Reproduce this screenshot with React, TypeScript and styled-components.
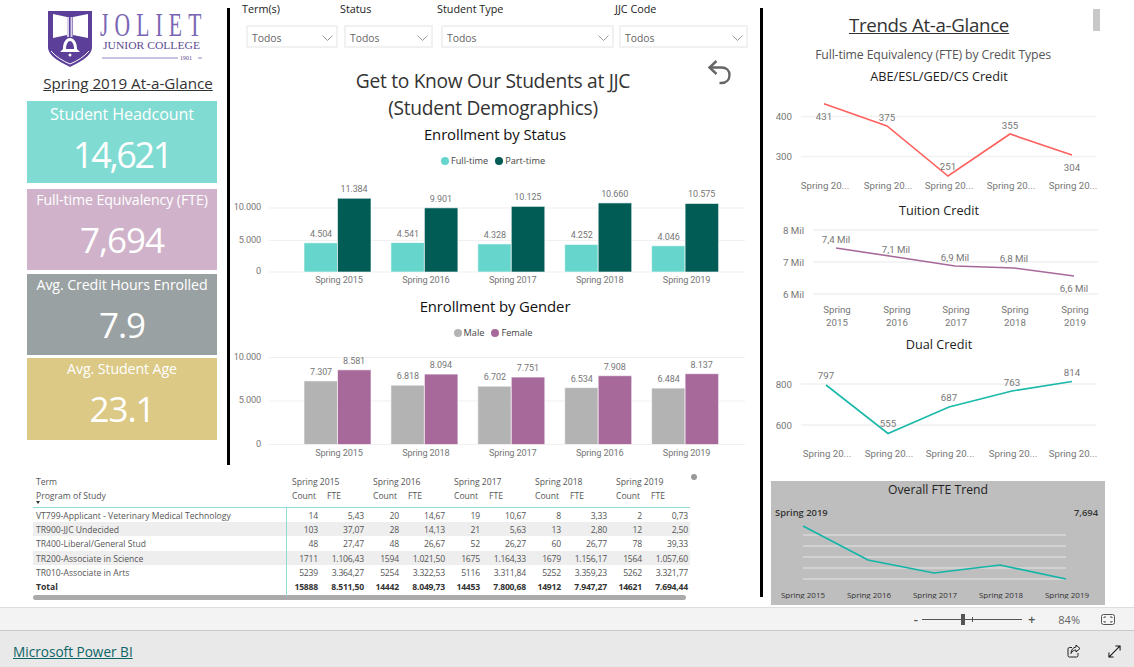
import React from 'react';
import styled, { createGlobalStyle } from 'styled-components';

const SANS = '"Open Sans", "Noto Sans", sans-serif';
const YEARS = ['Spring 2015', 'Spring 2016', 'Spring 2017', 'Spring 2018', 'Spring 2019'];

const GlobalStyle = createGlobalStyle`
  html, body { margin: 0; padding: 0; background: #fff; }
  body { font-family: ${SANS}; overflow: hidden; }
`;

const Page = styled('div')`
  width: 1134px;
  height: 667px;
  display: flex;
  flex-direction: column;
`;

const Report = styled('div')`
  height: 607px;
  display: flex;
  position: relative;
  background: #fff;
`;

const LeftGroup = styled('div')`
  width: 760px;
  display: flex;
  flex-direction: column;
`;

const TopRow = styled('div')`
  height: 465px;
  display: flex;
`;

const Divider = styled('div')<{ $bottom: number }>`
  width: 3px;
  flex: none;
  background: #000;
  margin-top: 8px;
  margin-bottom: ${(p) => p.$bottom}px;
`;

/* left sidebar */
const Sidebar = styled('div')`
  width: 227px;
  flex: none;
  padding-top: 8px;
  box-sizing: border-box;
`;

const LogoSvg = styled('svg')`
  display: block;
  margin-left: 46px;
`;

const GlanceTitle = styled('div')`
  margin-top: 3px;
  height: 20px;
  line-height: 20px;
  text-align: center;
  font-size: 15.2px;
  color: #333;
  text-decoration: underline;
  padding-left: 29px;
  white-space: nowrap;
`;

const Cards = styled('div')`
  margin: 8px 0 0 27px;
  width: 190px;
`;

const Card = styled('div')<{ $bg: string; $h: number; $mt: number }>`
  height: ${(p) => p.$h}px;
  margin-top: ${(p) => p.$mt}px;
  background: ${(p) => p.$bg};
  color: #fff;
  text-align: center;
  overflow: hidden;
`;

const CardLabel = styled('div')<{ $big?: boolean }>`
  font-size: ${(p) => (p.$big ? 16.1 : 14.2)}px;
  line-height: 20px;
  margin-top: ${(p) => (p.$big ? 3 : 1)}px;
  white-space: nowrap;
  letter-spacing: -0.1px;
`;

const CardValue = styled('div')<{ $big?: boolean }>`
  font-size: ${(p) => (p.$big ? 36 : 35)}px;
  font-weight: 400;
  line-height: 44px;
  margin-top: ${(p) => (p.$big ? 9 : 8)}px;
  letter-spacing: ${(p) => (p.$big ? -2.4 : -1)}px;
`;

/* centre column */
const Center = styled('div')`
  flex: 1;
  min-width: 0;
  position: relative;
`;

const Filters = styled('div')`
  display: flex;
  padding-left: 16px;
  height: 48px;
`;

const Filter = styled('div')<{ $w: number; $mr: number }>`
  width: ${(p) => p.$w}px;
  margin-right: ${(p) => p.$mr}px;
  flex: none;
`;

const FilterLabel = styled('div')`
  margin-left: -4px;
  height: 25px;
  line-height: 17px;
  font-size: 10.8px;
  color: #222;
`;

const Select = styled('div')`
  height: 23px;
  box-sizing: border-box;
  border: 2px solid #f1f1f1;
  display: flex;
  align-items: center;
  justify-content: space-between;
  padding: 3px 3px 0 4px;
  font-size: 10.4px;
  color: #666;
`;

const PageTitle = styled('div')`
  margin-top: 19px;
  padding-right: 4px;
  text-align: center;
  font-size: 19.2px;
  line-height: 27px;
  color: #333;
  letter-spacing: -0.3px;
`;

const UndoButton = styled('svg')`
  position: absolute;
  left: 476px;
  top: 58px;
`;

const SectionTitle = styled('div')<{ $mt: number }>`
  margin-top: ${(p) => p.$mt}px;
  text-align: center;
  font-size: 14.9px;
  line-height: 20px;
  color: #111;
  letter-spacing: -0.1px;
`;

const Legend = styled('div')`
  display: flex;
  justify-content: center;
  gap: 7px;
  height: 14px;
  margin-top: 10px;
  padding-right: 4px;
  font-size: 9.2px;
  line-height: 14px;
  color: #444;
`;

const LegendItem = styled('div')`
  display: flex;
  align-items: center;
  gap: 2px;
`;

const Dot = styled('span')<{ $c: string }>`
  width: 8px;
  height: 8px;
  border-radius: 50%;
  background: ${(p) => p.$c};
`;

const ChartSvg = styled('svg')`
  display: block;
  overflow: hidden;
`;

const AxisText = styled('text')`
  font-family: Roboto, "Liberation Sans", sans-serif;
  font-size: 9.2px;
  letter-spacing: -0.15px;
  fill: #777;
`;

const ValueText = styled('text')`
  font-family: Roboto, "Liberation Sans", sans-serif;
  font-size: 9px;
  letter-spacing: -0.1px;
  fill: #777;
`;

const LineText = styled('text')`
  font-family: Roboto, "Liberation Sans", sans-serif;
  font-size: 9.7px;
  fill: #777;
`;

/* table */
const TableArea = styled('div')`
  position: relative;
  padding: 9px 0 0 33px;
`;

const ScrollDot = styled('span')`
  position: absolute;
  left: 691px;
  top: 9px;
  width: 6px;
  height: 6px;
  border-radius: 50%;
  background: #999;
`;

const COLS = '254px 31px 46px 35px 46px 35px 46px 35px 46px 35px 46px';

const HeadRow = styled('div')<{ $h: number; $pb?: number }>`
  display: grid;
  grid-template-columns: ${COLS};
  height: ${(p) => p.$h}px;
  box-sizing: border-box;
  padding-bottom: ${(p) => p.$pb ?? 0}px;
  align-items: center;
  font-size: 8.6px;
  color: #555;
  white-space: nowrap;
`;

const HeadName = styled('div')`
  padding-left: 3px;
  position: relative;
`;

const HeadCell = styled('div')<{ $pl: number; $span?: number }>`
  padding-left: ${(p) => p.$pl}px;
  grid-column: span ${(p) => p.$span ?? 1};
`;

const SortMark = styled('span')`
  position: absolute;
  left: 3px;
  top: 11px;
  border-left: 2px solid transparent;
  border-right: 2px solid transparent;
  border-top: 3px solid #333;
`;

const Body = styled('div')`
  border-top: 1.5px solid #8fdcd4;
  width: 657px;
`;

const Row = styled('div')<{ $alt?: boolean; $bold?: boolean }>`
  display: grid;
  grid-template-columns: ${COLS};
  height: 14.2px;
  line-height: 17px;
  font-size: 8.6px;
  white-space: nowrap;
  background: ${(p) => (p.$alt ? '#eeeeee' : 'transparent')};
  font-weight: ${(p) => (p.$bold ? 700 : 400)};
  color: ${(p) => (p.$bold ? '#333' : '#555')};
`;

const NameCell = styled('div')`
  padding-left: 3px;
  border-right: 1.5px solid #8fdcd4;
`;

const NumCell = styled('div')`
  text-align: right;
  letter-spacing: -0.2px;
`;

const TableScroll = styled('div')`
  margin-top: 2px;
  width: 653px;
  height: 5px;
  border-radius: 3px;
  background: #aaa;
`;

/* right column */
const Right = styled('div')`
  flex: 1;
  min-width: 0;
  position: relative;
`;

const ReportScroll = styled('div')`
  position: absolute;
  left: 330px;
  top: 9px;
  width: 7px;
  height: 22px;
  background: #c8c8c8;
`;

const TrendsTitle = styled('div')`
  width: 332px;
  margin-top: 11px;
  text-align: center;
  font-size: 18.7px;
  line-height: 27px;
  color: #333;
  text-decoration: underline;
  letter-spacing: -0.3px;
`;

const Subtitle = styled('div')`
  width: 340px;
  margin-top: 8px;
  text-align: center;
  font-size: 12.3px;
  line-height: 18px;
  color: #555;
  letter-spacing: -0.15px;
`;

const ChartTitle = styled('div')<{ $mt?: number }>`
  width: 352px;
  margin-top: ${(p) => p.$mt ?? 0}px;
  text-align: center;
  font-size: 12.7px;
  line-height: 18px;
  color: #222;
`;

const TrendPanel = styled('div')`
  margin: 12px 0 0 8px;
  width: 334px;
  height: 124px;
  background: #bebebe;
`;

const PanelTitle = styled('div')`
  height: 18px;
  line-height: 18px;
  text-align: center;
  font-size: 12.2px;
  color: #222;
`;

const PanelText = styled('text')<{ $strong?: boolean }>`
  font-family: ${SANS};
  font-size: ${(p) => (p.$strong ? 9.4 : 8)}px;
  font-weight: ${(p) => (p.$strong ? 600 : 400)};
  fill: #333;
`;

/* bottom bars */
const ZoomBar = styled('div')`
  height: 24px;
  box-sizing: border-box;
  background: #f3f3f3;
  border-top: 1px solid #dedede;
  border-bottom: 1px solid #c9c9c9;
  display: flex;
  align-items: center;
  justify-content: flex-end;
  font-size: 11px;
  color: #666;
  padding-right: 19px;
`;

const ZoomSign = styled('span')<{ $mr: number }>`
  margin-right: ${(p) => p.$mr}px;
  font-size: 13px;
  font-weight: 600;
  color: #555;
`;

const ZoomTrack = styled('div')`
  width: 100px;
  height: 1px;
  background: #555;
  position: relative;
  margin-right: 6px;
`;

const ZoomThumb = styled('span')`
  position: absolute;
  left: 39px;
  top: -5px;
  width: 4px;
  height: 11px;
  background: #555;
`;

const ZoomTick = styled('span')`
  position: absolute;
  left: 50px;
  top: -2px;
  width: 1px;
  height: 5px;
  background: #555;
`;

const ZoomValue = styled('span')`
  margin: 0 21px 0 23px;
`;

const Footer = styled('div')`
  flex: 1;
  box-sizing: border-box;
  background: #e9e9e9;
  display: flex;
  align-items: center;
  padding: 4px 13px 0;
`;

const PowerBiLink = styled('a')`
  font-size: 13.6px;
  color: #0b6567;
  text-decoration: underline;
  margin-right: auto;
`;

const FooterIcon = styled('svg')<{ $mr: number }>`
  margin-right: ${(p) => p.$mr}px;
`;

const Chevron: React.FC = () => (
  <svg width="11" height="6" viewBox="0 0 11 6" fill="none" stroke="#999" strokeWidth="1">
    <path d="M0.5 0.5l5 5 5-5" />
  </svg>
);

type BarProps = {
  rows: { label: string; a: number; b: number }[];
  colors: [string, string];
  height: number;
  base: number;
  scale: number;
  ticks: { y: number; t: string }[];
};

const fmt = (n: number) => n.toLocaleString('de-DE');

const BarChart: React.FC<BarProps> = ({ rows, colors, height, base, scale, ticks }) => (
  <ChartSvg width={530} height={height}>
    {ticks.map((tick) => (
      <g key={tick.t}>
        <line x1={39} x2={515} y1={tick.y} y2={tick.y} stroke="#f0f0f0" strokeWidth="1.2" />
        <AxisText x={31} y={tick.y + 2} textAnchor="end">{tick.t}</AxisText>
      </g>
    ))}
    {rows.map((row, i) => {
      const x = 74 + i * 86.9;
      const ha = row.a * scale;
      const hb = row.b * scale;
      return (
        <g key={i}>
          <rect x={x} y={base - ha} width={33.5} height={ha} fill={colors[0]} stroke="#fff" strokeOpacity="0.6" />
          <rect x={x + 33.5} y={base - hb} width={33.5} height={hb} fill={colors[1]} stroke="#fff" strokeOpacity="0.6" />
          <ValueText x={x + 17} y={base - ha - 6} textAnchor="middle">{fmt(row.a)}</ValueText>
          <ValueText x={x + 50} y={base - hb - 6} textAnchor="middle">{fmt(row.b)}</ValueText>
          <AxisText x={x + 35} y={base + 11} textAnchor="middle">{row.label}</AxisText>
        </g>
      );
    })}
  </ChartSvg>
);

type Pt = { x: number; y: number; label: string; ly: number };
type LineProps = {
  points: Pt[];
  color: string;
  grid: { y: number; t: string }[];
  gridFrom: number;
  gridTo: number;
  labelX: number;
  xLabels: string[][];
  xLabelY: number;
};

const LineChart: React.FC<LineProps> = ({ points, color, grid, gridFrom, gridTo, labelX, xLabels, xLabelY }) => (
  <ChartSvg width={371} height={116}>
    {grid.map((g) => (
      <g key={g.t}>
        <line x1={gridFrom} x2={gridTo} y1={g.y} y2={g.y} stroke="#f1f1f1" strokeWidth="1.3" />
        <LineText x={labelX} y={g.y + 3.5} textAnchor="end">{g.t}</LineText>
      </g>
    ))}
    <polyline fill="none" stroke={color} strokeWidth="1.6" points={points.map((p) => `${p.x},${p.y}`).join(' ')} />
    {points.map((p, i) => (
      <g key={i}>
        <LineText x={p.x} y={p.ly + 3.5} textAnchor="middle">{p.label}</LineText>
        {xLabels[i].map((line, j) => (
          <LineText key={j} x={p.x + 1} y={xLabelY + j * 13} textAnchor="middle">{line}</LineText>
        ))}
      </g>
    ))}
  </ChartSvg>
);

const CARDS = [
  { label: 'Student Headcount', value: '14,621', bg: '#80dbd3', h: 82, mt: 0, big: true },
  { label: 'Full-time Equivalency (FTE)', value: '7,694', bg: '#d0b3ca', h: 81, mt: 6 },
  { label: 'Avg. Credit Hours Enrolled', value: '7.9', bg: '#9aa1a2', h: 81, mt: 4 },
  { label: 'Avg. Student Age', value: '23.1', bg: '#dbc985', h: 82, mt: 3 },
];

const FILTERS = [
  { label: 'Term(s)', w: 92, mr: 6 },
  { label: 'Status', w: 89, mr: 8 },
  { label: 'Student Type', w: 173, mr: 5 },
  { label: 'JJC Code', w: 129, mr: 0 },
];

const STATUS = [
  { label: YEARS[0], a: 4504, b: 11384 },
  { label: YEARS[1], a: 4541, b: 9901 },
  { label: YEARS[2], a: 4328, b: 10125 },
  { label: YEARS[3], a: 4252, b: 10660 },
  { label: YEARS[4], a: 4046, b: 10575 },
];

const GENDER = [
  { label: 'Spring 2015', a: 7307, b: 8581 },
  { label: 'Spring 2018', a: 6818, b: 8094 },
  { label: 'Spring 2017', a: 6702, b: 7751 },
  { label: 'Spring 2016', a: 6534, b: 7908 },
  { label: 'Spring 2019', a: 6484, b: 8137 },
];

const TABLE = [
  { name: 'VT799-Applicant - Veterinary Medical Technology', cells: ['14', '5,43', '20', '14,67', '19', '10,67', '8', '3,33', '2', '0,73'] },
  { name: 'TR900-JJC Undecided', cells: ['103', '37,07', '28', '14,13', '21', '5,63', '13', '2,80', '12', '2,50'] },
  { name: 'TR400-Liberal/General Stud', cells: ['48', '27,47', '48', '26,67', '52', '26,27', '60', '26,77', '78', '39,33'] },
  { name: 'TR200-Associate in Science', cells: ['1711', '1.106,43', '1594', '1.021,50', '1675', '1.164,33', '1679', '1.156,17', '1564', '1.057,60'] },
  { name: 'TR010-Associate in Arts', cells: ['5239', '3.364,27', '5254', '3.322,53', '5116', '3.311,84', '5252', '3.359,23', '5262', '3.321,77'] },
  { name: 'Total', cells: ['15888', '8.511,50', '14442', '8.049,73', '14453', '7.800,68', '14912', '7.947,27', '14621', '7.694,44'], bold: true },
];

const SHORT = YEARS.map(() => ['Spring 20...']);
const TWO_LINE = YEARS.map((y) => y.split(' '));

const App: React.FC = () => (
  <Page>
    <GlobalStyle />
    <Report>
      <LeftGroup>
        <TopRow>
          <Sidebar>
            <LogoSvg width="166" height="62" viewBox="0 0 166 62">
              <path d="M2 3h44v36c0 9-12 15-22 20C14 54 2 48 2 39z" fill="#5b3f98" />
              <path d="M7 6l14 3v18l-14 3z" fill="#fff" />
              <path d="M27 9l15-3v24l-15-3z" fill="#fff" />
              <path d="M21 9h2v20h-2zM24.5 9h2v20h-2z" fill="#d8d0ea" />
              <path d="M17 41c0-7 3-11 7-11s7 4 7 11l3 3H14z" fill="#fff" />
              <path d="M20 41c0-5 2-8 4-8s4 3 4 8z" fill="#5b3f98" />
              <circle cx="24" cy="47" r="1.5" fill="#fff" />
              <path d="M5 43c5 6 12 10 19 13 7-3 14-7 19-13" fill="none" stroke="#fff" strokeWidth="1" />
              <text transform="translate(54,28) scale(0.72,1.15)" letterSpacing="8.5" fontFamily="'Liberation Serif', serif" fontSize="30" fill="#7a66b4">JOLIET</text>
              <text x="57" y="41" textLength="97" lengthAdjust="spacingAndGlyphs" fontFamily="'Liberation Serif', serif" fontSize="9.5" fill="#5b4a8f">JUNIOR COLLEGE</text>
              <path d="M56 50h76M152 50h4" stroke="#7a66b4" strokeWidth="0.8" />
              <text x="134" y="52" fontFamily="'Liberation Serif', serif" fontSize="6" fill="#5b4a8f">1901</text>
            </LogoSvg>
            <GlanceTitle>Spring 2019 At-a-Glance</GlanceTitle>
            <Cards>
              {CARDS.map((c) => (
                <Card key={c.label} $bg={c.bg} $h={c.h} $mt={c.mt}>
                  <CardLabel $big={c.big}>{c.label}</CardLabel>
                  <CardValue $big={c.big}>{c.value}</CardValue>
                </Card>
              ))}
            </Cards>
          </Sidebar>
          <Divider $bottom={0} />
          <Center>
            <Filters>
              {FILTERS.map((f) => (
                <Filter key={f.label} $w={f.w} $mr={f.mr}>
                  <FilterLabel>{f.label}</FilterLabel>
                  <Select>
                    Todos
                    <Chevron />
                  </Select>
                </Filter>
              ))}
            </Filters>
            <PageTitle>
              Get to Know Our Students at JJC
              <br />
              (Student Demographics)
            </PageTitle>
            <UndoButton width="27" height="28" viewBox="0 0 26 28" fill="none" stroke="#666" strokeWidth="2.4">
              <path d="M10 3L3 9.5l7 6.5" />
              <path d="M3 9.5h12c5 0 8 3 8 7.5s-3 8-8 8h-2" />
            </UndoButton>
            <SectionTitle $mt={3}>Enrollment by Status</SectionTitle>
            <Legend>
              <LegendItem><Dot $c="#66d5cb" />Full-time</LegendItem>
              <LegendItem><Dot $c="#005c55" />Part-time</LegendItem>
            </Legend>
            <BarChart
              rows={STATUS}
              colors={['#66d5cb', '#005c55']}
              height={126}
              base={104}
              scale={0.00648}
              ticks={[
                { y: 40, t: '10.000' },
                { y: 72.5, t: '5.000' },
                { y: 104, t: '0' },
              ]}
            />
            <SectionTitle $mt={2}>Enrollment by Gender</SectionTitle>
            <Legend>
              <LegendItem><Dot $c="#b3b3b3" />Male</LegendItem>
              <LegendItem><Dot $c="#a66999" />Female</LegendItem>
            </Legend>
            <BarChart
              rows={GENDER}
              colors={['#b3b3b3', '#a66999']}
              height={125}
              base={104.5}
              scale={0.0087}
              ticks={[
                { y: 17.5, t: '10.000' },
                { y: 61, t: '5.000' },
                { y: 104.5, t: '0' },
              ]}
            />
          </Center>
        </TopRow>
        <TableArea>
          <ScrollDot />
          <HeadRow $h={15}>
            <HeadName>Term</HeadName>
            {YEARS.map((y, i) => (
              <HeadCell key={y} $pl={i === 0 ? 5 : 9} $span={2}>{y}</HeadCell>
            ))}
          </HeadRow>
          <HeadRow $h={18} $pb={4}>
            <HeadName>
              Program of Study
              <SortMark />
            </HeadName>
            {YEARS.map((y, i) => (
              <React.Fragment key={y}>
                <HeadCell $pl={i === 0 ? 5 : 9}>Count</HeadCell>
                <HeadCell $pl={9}>FTE</HeadCell>
              </React.Fragment>
            ))}
          </HeadRow>
          <Body>
            {TABLE.map((row, i) => (
              <Row key={row.name} $alt={i === 1 || i === 3} $bold={row.bold}>
                <NameCell>{row.name}</NameCell>
                {row.cells.map((c, j) => (
                  <NumCell key={j}>{c}</NumCell>
                ))}
              </Row>
            ))}
          </Body>
          <TableScroll />
        </TableArea>
      </LeftGroup>
      <Divider $bottom={10} />
      <Right>
        <ReportScroll />
        <TrendsTitle>Trends At-a-Glance</TrendsTitle>
        <Subtitle>Full-time Equivalency (FTE) by Credit Types</Subtitle>
        <ChartTitle $mt={3}>ABE/ESL/GED/CS Credit</ChartTitle>
        <LineChart
          color="#fd625e"
          gridFrom={38}
          gridTo={333}
          labelX={29}
          grid={[{ y: 31.5, t: '400' }, { y: 71.5, t: '300' }]}
          xLabels={SHORT}
          xLabelY={104}
          points={[
            { x: 61, y: 18.7, label: '431', ly: 31 },
            { x: 124, y: 41, label: '375', ly: 32 },
            { x: 185, y: 91, label: '251', ly: 81 },
            { x: 247, y: 49, label: '355', ly: 40 },
            { x: 309, y: 70, label: '304', ly: 82 },
          ]}
        />
        <ChartTitle>Tuition Credit</ChartTitle>
        <LineChart
          color="#a66999"
          gridFrom={50}
          gridTo={335}
          labelX={41}
          grid={[{ y: 11, t: '8 Mil' }, { y: 43, t: '7 Mil' }, { y: 75, t: '6 Mil' }]}
          xLabels={TWO_LINE}
          xLabelY={93.5}
          points={[
            { x: 73, y: 29, label: '7,4 Mil', ly: 20 },
            { x: 133, y: 38, label: '7,1 Mil', ly: 30 },
            { x: 192, y: 47, label: '6,9 Mil', ly: 38 },
            { x: 251, y: 49, label: '6,8 Mil', ly: 39 },
            { x: 311, y: 57, label: '6,6 Mil', ly: 69 },
          ]}
        />
        <ChartTitle>Dual Credit</ChartTitle>
        <LineChart
          color="#1ab9a9"
          gridFrom={38}
          gridTo={333}
          labelX={29}
          grid={[{ y: 31, t: '800' }, { y: 72, t: '600' }]}
          xLabels={SHORT}
          xLabelY={104}
          points={[
            { x: 63, y: 32, label: '797', ly: 22 },
            { x: 125, y: 80.5, label: '555', ly: 70 },
            { x: 186, y: 54, label: '687', ly: 44 },
            { x: 249, y: 38, label: '763', ly: 29 },
            { x: 309, y: 28.5, label: '814', ly: 19 },
          ]}
        />
        <TrendPanel>
          <PanelTitle>Overall FTE Trend</PanelTitle>
          <ChartSvg width={334} height={100}>
            <PanelText x={4} y={17} $strong>Spring 2019</PanelText>
            <PanelText x={327} y={17} textAnchor="end" $strong>7,694</PanelText>
            {[36, 47, 58, 69, 80].map((y) => (
              <line key={y} x1={32} x2={295} y1={y} y2={y} stroke="#e6e6e6" strokeWidth="1" />
            ))}
            <polyline fill="none" stroke="#12b5a8" strokeWidth="1.6" points="32,27 97,61 163,74 229,66 295,80" />
            {YEARS.map((y, i) => (
              <PanelText key={y} x={32 + i * 66} y={99} textAnchor="middle">{y}</PanelText>
            ))}
          </ChartSvg>
        </TrendPanel>
      </Right>
    </Report>
    <ZoomBar>
      <ZoomSign $mr={4}>-</ZoomSign>
      <ZoomTrack>
        <ZoomThumb />
        <ZoomTick />
      </ZoomTrack>
      <ZoomSign $mr={0}>+</ZoomSign>
      <ZoomValue>84%</ZoomValue>
      <svg width="14" height="11" viewBox="0 0 14 11" fill="none" stroke="#555" strokeWidth="1">
        <rect x="0.5" y="0.5" width="13" height="10" rx="2" />
        <path d="M3 4V3h2M9 3h2v1M3 7v1h2M9 8h2V7" />
      </svg>
    </ZoomBar>
    <Footer>
      <PowerBiLink>Microsoft Power BI</PowerBiLink>
      <FooterIcon $mr={27} width="14" height="14" viewBox="0 0 14 14" fill="none" stroke="#222" strokeWidth="1">
        <path d="M5 3.5H2.5A1.5 1.5 0 0 0 1 5v6.5A1.5 1.5 0 0 0 2.5 13h7a1.5 1.5 0 0 0 1.5-1.5V9" />
        <path d="M9 1l4 3.5L9 8V6C7 6 5 7 4 9.5 4 6 6 3.5 9 3z" />
      </FooterIcon>
      <FooterIcon $mr={0} width="13" height="13" viewBox="0 0 14 14" fill="none" stroke="#111" strokeWidth="1.1">
        <path d="M1 13L13 1M8 1h5v5M1 8v5h5" />
      </FooterIcon>
    </Footer>
  </Page>
);

export default App;
